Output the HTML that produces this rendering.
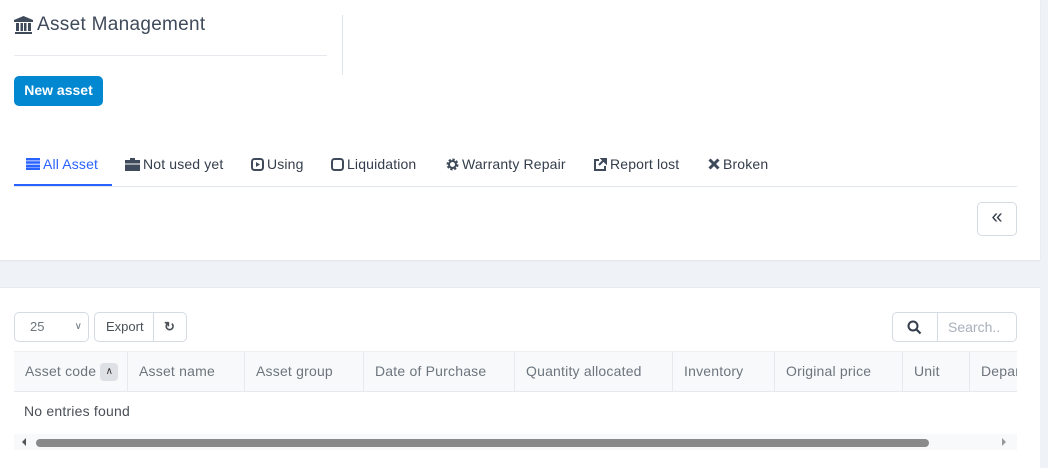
<!DOCTYPE html>
<html><head><style>
*{box-sizing:border-box;margin:0;padding:0}
body{width:1048px;height:468px;background:#eff3f8;font-family:"Liberation Sans",sans-serif;position:relative;overflow:hidden;color:#495057}
.card{position:absolute;left:0;width:1040px;background:#fff}
.abs{position:absolute}
.tab{position:absolute;top:155px;font-size:14px;color:#333d4b;white-space:nowrap;display:flex;align-items:center;gap:3px;letter-spacing:.15px}
.th{position:absolute;top:0;height:39px;line-height:38px;font-size:14px;color:#6c757d;border-right:1px solid #e6eaef;padding-left:11px;white-space:nowrap;overflow:hidden;letter-spacing:.2px}
</style></head><body>
<div class="card" style="top:0;height:260px;box-shadow:0 1px 2px rgba(0,0,0,.06)">
  <div class="abs" style="left:14px;top:14px;font-size:19px;color:#3f4a5a;display:flex;align-items:center;gap:4px;letter-spacing:.3px">
    <svg width="19" height="18" viewBox="0 0 19 18"><path d="M9.5 0L19 4v2H0V4z M1 16h17v2H1z M2 7h3v8H2z M6.5 7h2.5v8H6.5z M10 7h2.5v8H10z M14 7h3v8h-3z" fill="#3f4a5a"/></svg>
    Asset Management</div>
  <div class="abs" style="left:14px;top:55px;width:313px;height:1px;background:#e6eaef"></div>
  <div class="abs" style="left:342px;top:15px;width:1px;height:60px;background:#dfe4ea"></div>
  <div class="abs" style="left:14px;top:76px;width:89px;height:30px;background:#0288d1;border-radius:5px;color:#fff;font-weight:bold;font-size:14px;line-height:29px;text-align:center">New asset</div>
  <div class="tab" style="left:26px;color:#2962ff;top:156px"><svg width="14" height="12"><path d="M0 0h14v2.5H0zM0 3.3h14v2.5H0zM0 6.6h14v2.5H0zM0 9.5h14v2.5H0z" fill="#2962ff"/></svg>All Asset</div>
  <div class="abs" style="left:14px;top:184px;width:98px;height:2px;background:#2962ff"></div>
  <div class="tab" style="left:125px;top:156px"><svg width="15" height="13"><path d="M5 0h5v2H5zM0 2h15v11H0z" fill="#3f4a5a"/><path d="M0 6h15" stroke="#fff"/></svg>Not used yet</div>
  <div class="tab" style="left:251px;top:156px"><svg width="13" height="13"><rect x="1" y="1" width="11" height="11" rx="2.5" fill="none" stroke="#3f4a5a" stroke-width="2"/><path d="M5 4l4 2.5L5 9z" fill="#3f4a5a"/></svg>Using</div>
  <div class="tab" style="left:331px;top:156px"><svg width="13" height="13"><rect x="1" y="1" width="11" height="11" rx="2.5" fill="none" stroke="#3f4a5a" stroke-width="2"/></svg>Liquidation</div>
  <div class="tab" style="left:446px;top:156px"><svg width="13" height="13"><circle cx="6.5" cy="6.5" r="4.5" fill="none" stroke="#3f4a5a" stroke-width="3" stroke-dasharray="2 1.5"/><circle cx="6.5" cy="6.5" r="3.5" fill="none" stroke="#3f4a5a" stroke-width="2"/></svg>Warranty Repair</div>
  <div class="tab" style="left:593px;top:156px"><svg width="14" height="13"><path d="M6 2H2v10h10V8" fill="none" stroke="#3f4a5a" stroke-width="2"/><path d="M8 0h6v6zM6 7l6-6" stroke="#3f4a5a" stroke-width="2" fill="#3f4a5a"/></svg>Report lost</div>
  <div class="tab" style="left:708px;top:156px"><svg width="12" height="12"><path d="M1.5 1.5l9 9M10.5 1.5l-9 9" stroke="#3f4a5a" stroke-width="3"/></svg>Broken</div>
  <div class="abs" style="left:14px;top:186px;width:1003px;height:1px;background:#e3e8ee"></div>
  <div class="abs" style="left:977px;top:202px;width:40px;height:34px;border:1px solid #d5dbe3;border-radius:5px;text-align:center;line-height:29px;font-size:20px;color:#333d4b">«</div>
</div>
<div class="card" style="top:287px;height:181px;border-top:1px solid #e6eaef">
  <div class="abs" style="left:14px;top:24px;width:75px;height:30px;border:1px solid #d5dbe3;border-radius:5px;font-size:13px;color:#6c757d;line-height:28px;padding-left:15px">25<span style="position:absolute;right:6px;top:0;font-size:10px">&#x2228;</span></div>
  <div class="abs" style="left:94px;top:24px;width:93px;height:30px;border:1px solid #d5dbe3;border-radius:5px;font-size:13px;color:#495057;line-height:28px"><span style="padding-left:11px">Export</span><span style="position:absolute;left:58px;top:0;width:1px;height:28px;background:#d5dbe3"></span><span style="position:absolute;left:69px;top:0;font-size:13px;font-weight:bold">&#x21bb;</span></div>
  <div class="abs" style="left:892px;top:24px;width:125px;height:30px;border:1px solid #d5dbe3;border-radius:5px">
    <svg class="abs" style="left:14px;top:7px" width="15" height="15"><circle cx="6" cy="6" r="4.5" fill="none" stroke="#333d4b" stroke-width="2"/><path d="M9.5 9.5l4 4" stroke="#333d4b" stroke-width="2.2"/></svg>
    <span class="abs" style="left:44px;top:0;width:1px;height:28px;background:#d5dbe3"></span>
    <span class="abs" style="left:55px;top:6px;font-size:14px;color:#a7b0bc">Search..</span></div>
  <div class="abs" style="left:14px;top:63px;width:1003px;height:41px;background:#f8f9fb;border-top:1px solid #eef1f4;border-bottom:1px solid #e6eaef;overflow:hidden">
    <div class="th" style="left:0;width:114px">Asset code <span style="display:inline-block;width:18px;height:18px;background:#dde1e6;border-radius:4px;vertical-align:middle;line-height:18px;text-align:center;font-size:10px;color:#333">&#x2227;</span></div>
    <div class="th" style="left:114px;width:117px">Asset name</div>
    <div class="th" style="left:231px;width:119px">Asset group</div>
    <div class="th" style="left:350px;width:151px">Date of Purchase</div>
    <div class="th" style="left:501px;width:158px">Quantity allocated</div>
    <div class="th" style="left:659px;width:102px">Inventory</div>
    <div class="th" style="left:761px;width:128px">Original price</div>
    <div class="th" style="left:889px;width:67px">Unit</div>
    <div class="th" style="left:956px;width:80px;border:none">Department</div>
  </div>
  <div class="abs" style="left:24px;top:115px;font-size:14px;color:#495057;letter-spacing:.2px">No entries found</div>
  <div class="abs" style="left:14px;top:146px;width:1003px;height:16px;background:#f8f9fa">
    <span class="abs" style="left:8px;top:4px;width:0;height:0;border:4px solid transparent;border-right:4px solid #555;border-left:0"></span>
    <span class="abs" style="left:22px;top:5px;width:893px;height:8px;background:#8a8a8a;border-radius:4px"></span>
    <span class="abs" style="left:988px;top:4px;width:0;height:0;border:4px solid transparent;border-left:4px solid #999;border-right:0"></span>
  </div>
</div>
</body></html>
